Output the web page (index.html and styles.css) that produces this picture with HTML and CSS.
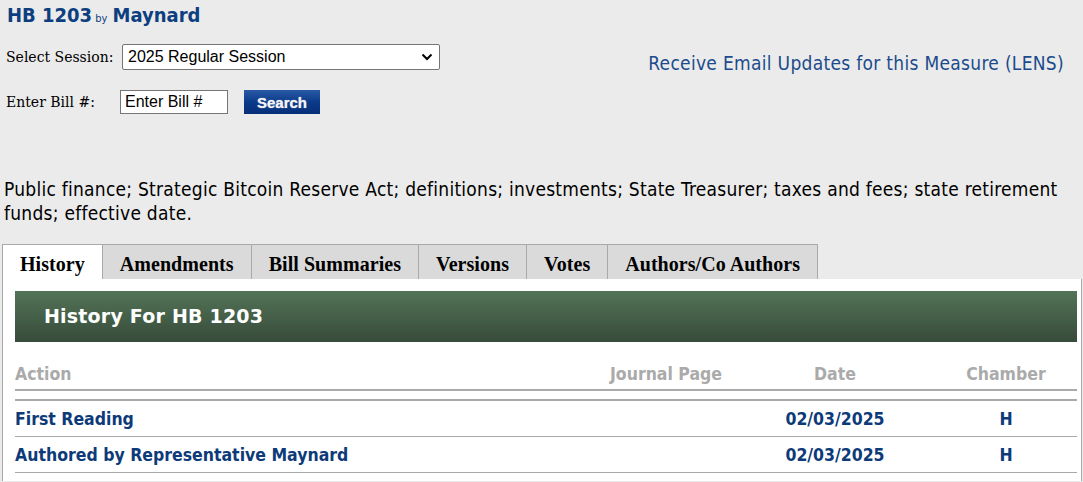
FILE: index.html
```html
<!DOCTYPE html>
<html>
<head>
<meta charset="utf-8">
<link rel="stylesheet" href="styles.css">
</head>
<body>
<div class="page">
  <h1 class="title">HB 1203<span class="by"> by </span>Maynard</h1>
  <div class="controls">
    <div class="form">
      <div class="form-row">
        <label class="label">Select Session:</label>
        <div class="select">
          <span>2025 Regular Session</span>
          <svg class="chev" width="12" height="8" viewBox="0 0 12 8"><path d="M1.5 1.5 L6 6 L10.5 1.5" fill="none" stroke="#000" stroke-width="2"/></svg>
        </div>
      </div>
      <div class="form-row row2">
        <label class="label">Enter Bill #:</label>
        <div class="input">Enter Bill #</div>
        <button class="search">Search</button>
      </div>
    </div>
    <a class="lens">Receive Email Updates for this Measure (LENS)</a>
  </div>
  <p class="desc">Public finance; Strategic Bitcoin Reserve Act; definitions; investments; State Treasurer; taxes and fees; state retirement funds; effective date.</p>
  <div class="tabs">
    <div class="tab active">History</div>
    <div class="tab">Amendments</div>
    <div class="tab">Bill Summaries</div>
    <div class="tab">Versions</div>
    <div class="tab">Votes</div>
    <div class="tab">Authors/Co Authors</div>
  </div>
  <div class="panel">
    <div class="panel-head">History For HB 1203</div>
    <div class="hist">
      <div class="hrow head">
        <div class="c-action">Action</div><div class="c-jp">Journal Page</div><div class="c-date">Date</div><div class="c-ch">Chamber</div>
      </div>
      <div class="rows">
        <div class="hrow">
          <div class="c-action">First Reading</div><div class="c-jp"></div><div class="c-date">02/03/2025</div><div class="c-ch">H</div>
        </div>
        <div class="hrow">
          <div class="c-action">Authored by Representative Maynard</div><div class="c-jp"></div><div class="c-date">02/03/2025</div><div class="c-ch">H</div>
        </div>
      </div>
    </div>
  </div>
</div>
</body>
</html>
```

FILE: styles.css
```css
html, body {
  margin: 0;
  padding: 0;
  background: #ebebeb;
}
.page {
  font-family: "DejaVu Sans Condensed", "DejaVu Sans", Verdana, sans-serif;
  font-stretch: condensed;
  color: #000;
}
.title {
  margin: 0;
  padding: 3px 0 0 7px;
  font-size: 20px;
  line-height: 24px;
  font-weight: bold;
  color: #0d3f80;
}
.by {
  font-size: 11px;
  font-weight: normal;
  margin-right: 2px;
}
.controls {
  display: flex;
  justify-content: space-between;
  align-items: flex-start;
  padding: 13px 19px 0 6px;
}
.form-row {
  display: flex;
  align-items: center;
}
.row2 {
  margin-top: 20px;
}
.label {
  font-family: "DejaVu Serif", "Liberation Serif", serif;
  font-stretch: normal;
  font-size: 14px;
  width: 114px;
}
.select {
  width: 318px;
  height: 26px;
  box-sizing: border-box;
  border: 1px solid #767676;
  border-radius: 2px;
  background: #fff;
  display: flex;
  align-items: center;
  justify-content: space-between;
  padding: 0 6px 0 5px;
  font-family: "Liberation Sans", Arial, sans-serif;
  font-stretch: normal;
  font-size: 16px;
  margin-left: 2px;
}
.chev {
  display: block;
}
.input {
  width: 108px;
  height: 24px;
  box-sizing: border-box;
  border: 1px solid #767676;
  background: #fff;
  font-family: "Liberation Sans", Arial, sans-serif;
  font-stretch: normal;
  font-size: 16px;
  line-height: 22px;
  padding-left: 4px;
}
.search {
  margin-left: 16px;
  width: 76px;
  height: 24px;
  border: none;
  background: linear-gradient(#2a5aa5, #0a3a8a 50%, #062f78);
  color: #f4f4f4;
  font-family: "Liberation Sans", Arial, sans-serif;
  font-weight: bold;
  font-size: 15px;
  text-shadow: 0 0 1px #cfd8e8;
  padding: 0;
}
.lens {
  margin-top: 8px;
  font-size: 19px;
  letter-spacing: 0.3px;
  color: #1b4b8c;
}
.desc {
  margin: 63px 0 0 4px;
  font-size: 19px;
  letter-spacing: 0.25px;
  line-height: 24px;
}
.tabs {
  display: flex;
  margin: 19px 0 0 2px;
}
.tab {
  font-family: "Liberation Serif", "Times New Roman", serif;
  font-stretch: normal;
  font-weight: bold;
  font-size: 20px;
  letter-spacing: 0.05px;
  height: 34px;
  line-height: 39px;
  background: #dadada;
  border: 1px solid #a9a9a9;
  border-bottom: none;
  border-left: none;
  padding: 0 17px;
}
.tab:first-child {
  border-left: 1px solid #a9a9a9;
}
.tab.active {
  background: #fff;
}
.panel {
  margin: 0 1px 0 2px;
  background: #fff;
  border-left: 1px solid #a9a9a9;
  border-right: 1px solid #a9a9a9;
  padding: 12px 4px 8px 12px;
}
.panel-head {
  height: 51px;
  background: linear-gradient(#537457, #374b3a);
  color: #fff;
  font-family: "DejaVu Sans", Verdana, sans-serif;
  font-stretch: normal;
  font-weight: bold;
  font-size: 19px;
  letter-spacing: 0.2px;
  line-height: 51px;
  padding-left: 29px;
}
.hist {
  margin-top: 16px;
  font-weight: bold;
  font-size: 17.5px;
}
.hrow {
  display: grid;
  grid-template-columns: 545px 212px 126px 1fr;
  align-items: center;
  box-sizing: border-box;
  height: 36px;
  border-bottom: 1px solid #a9a9a9;
  color: #0d3a78;
}
.hrow.head {
  height: 33px;
  color: #aaa;
  margin-bottom: 8px;
  border-bottom: 2px solid #aaa;
}
.rows {
  border-top: 2px solid #aaa;
}
.c-jp, .c-date, .c-ch {
  text-align: center;
}
.c-ch {
  padding-left: 37px;
}
```
